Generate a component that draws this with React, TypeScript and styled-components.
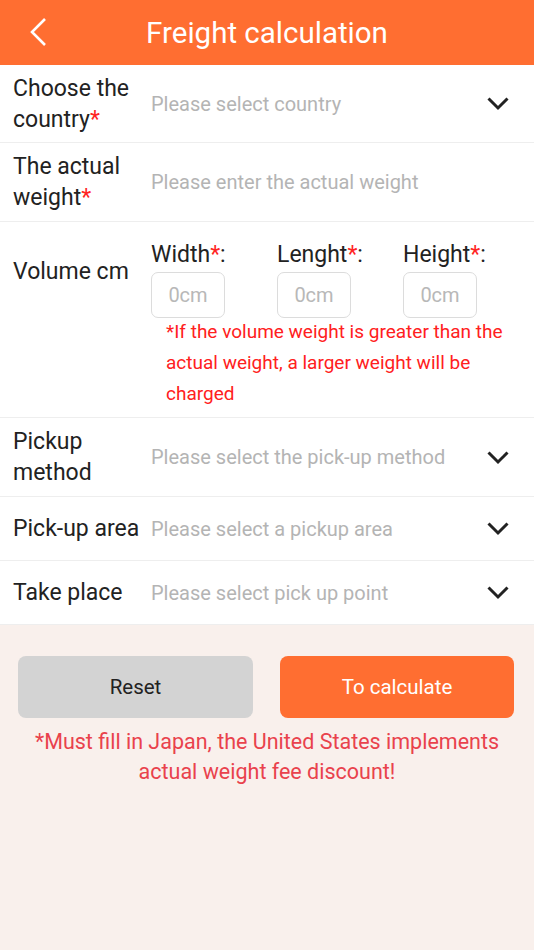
import styled, { createGlobalStyle } from 'styled-components';

const GlobalStyle = createGlobalStyle`
  html, body {
    margin: 0;
    padding: 0;
    background: #f9f0ec;
    font-family: Roboto, 'Noto Sans', sans-serif;
  }
  * {
    box-sizing: border-box;
  }
`;

const Page = styled.div`
  width: 534px;
  min-height: 950px;
  background: #f9f0ec;
`;

const Header = styled.div`
  height: 65px;
  background: #ff6e31;
  display: flex;
  align-items: center;
  justify-content: center;
  position: relative;
`;

const BackButton = styled.div`
  position: absolute;
  left: 29px;
  top: 17px;
  width: 19px;
  height: 30px;
`;

const Title = styled.div`
  color: #ffffff;
  font-size: 29.5px;
  margin-left: 0;
  margin-top: 0;
`;

const Form = styled.div`
  background: #ffffff;
`;

const Row = styled.div<{ $h: number }>`
  display: flex;
  align-items: center;
  min-height: ${(p) => p.$h}px;
  padding: 0 24px 0 13px;
  border-bottom: 1px solid #eeeeee;
`;

const VolumeRow = styled.div`
  display: flex;
  align-items: flex-start;
  padding: 17px 24px 8px 13px;
  border-bottom: 1px solid #eeeeee;
`;

const Label = styled.div<{ $top?: number }>`
  width: 138px;
  flex-shrink: 0;
  font-size: 23px;
  line-height: 31px;
  color: #222222;
  margin-top: ${(p) => p.$top || 0}px;
`;

const Star = styled.span`
  color: #ff2424;
`;

const Placeholder = styled.div`
  flex: 1;
  font-size: 20px;
  color: #b4b4b4;
  white-space: nowrap;
`;

const TextInput = styled.input`
  flex: 1;
  border: none;
  outline: none;
  padding: 0;
  font-family: inherit;
  font-size: 20px;
  color: #333;
  background: transparent;
  &::placeholder {
    color: #b4b4b4;
  }
`;

const Chevron = styled.svg`
  width: 24px;
  height: 15px;
  flex-shrink: 0;
  margin-left: 10px;
`;

const VolumeBody = styled.div`
  flex: 1;
`;

const DimGrid = styled.div`
  display: grid;
  grid-template-columns: 126px 126px 1fr;
`;

const DimCell = styled.div`
  display: flex;
  flex-direction: column;
`;

const DimLabel = styled.div`
  font-size: 23px;
  line-height: 31px;
  color: #222222;
`;

const DimInput = styled.input`
  width: 74px;
  height: 46px;
  margin-top: 2px;
  border: 1px solid #dcdcdc;
  border-radius: 7px;
  outline: none;
  text-align: center;
  font-family: inherit;
  font-size: 20px;
  color: #333;
  &::placeholder {
    color: #b8b8b8;
  }
`;

const VolumeNote = styled.div`
  margin-top: -2px;
  padding-left: 15px;
  font-size: 19px;
  line-height: 31px;
  color: #ff2020;
`;

const Footer = styled.div`
  padding: 31px 20px 0 18px;
`;

const Buttons = styled.div`
  display: grid;
  grid-template-columns: 235px 234px;
  column-gap: 27px;
`;

const Button = styled.button<{ $primary?: boolean }>`
  height: 62px;
  border: none;
  border-radius: 8px;
  font-family: inherit;
  font-size: 20.5px;
  background: ${(p) => (p.$primary ? '#ff6e31' : '#d3d3d3')};
  color: ${(p) => (p.$primary ? '#ffffff' : '#222222')};
`;

const FooterNote = styled.div`
  margin-top: 9px;
  text-align: center;
  font-size: 21.5px;
  line-height: 30px;
  color: #e9424c;
  padding-left: 2px;
`;

const Arrow = () => (
  <Chevron viewBox="0 0 24 15">
    <polyline points="2.5,2.5 12,12 21.5,2.5" fill="none" stroke="#222" strokeWidth="3" />
  </Chevron>
);

const SelectRow = ({ label, text, h }: { label: React.ReactNode; text: string; h: number }) => (
  <Row $h={h}>
    <Label>{label}</Label>
    <Placeholder>{text}</Placeholder>
    <Arrow />
  </Row>
);

const dims = ['Width', 'Lenght', 'Height'];

export default function App() {
  return (
    <Page>
      <GlobalStyle />
      <Header>
        <BackButton>
          <svg width="19" height="30" viewBox="0 0 19 30">
            <polyline points="16,2 3,15 16,28" fill="none" stroke="#fff" strokeWidth="2.6" />
          </svg>
        </BackButton>
        <Title>Freight calculation</Title>
      </Header>
      <Form>
        <SelectRow
          h={78}
          label={
            <>
              Choose the country<Star>*</Star>
            </>
          }
          text="Please select country"
        />
        <Row $h={79}>
          <Label>
            The actual weight<Star>*</Star>
          </Label>
          <TextInput placeholder="Please enter the actual weight" />
        </Row>
        <VolumeRow>
          <Label $top={17}>Volume cm</Label>
          <VolumeBody>
            <DimGrid>
              {dims.map((d) => (
                <DimCell key={d}>
                  <DimLabel>
                    {d}
                    <Star>*</Star>:
                  </DimLabel>
                  <DimInput placeholder="0cm" />
                </DimCell>
              ))}
            </DimGrid>
            <VolumeNote>
              *If the volume weight is greater than the actual weight, a larger weight will be charged
            </VolumeNote>
          </VolumeBody>
        </VolumeRow>
        <SelectRow h={79} label="Pickup method" text="Please select the pick-up method" />
        <SelectRow h={64} label="Pick-up area" text="Please select a pickup area" />
        <SelectRow h={64} label="Take place" text="Please select pick up point" />
      </Form>
      <Footer>
        <Buttons>
          <Button>Reset</Button>
          <Button $primary>To calculate</Button>
        </Buttons>
        <FooterNote>
          *Must fill in Japan, the United States implements
          <br />
          actual weight fee discount!
        </FooterNote>
      </Footer>
    </Page>
  );
}
